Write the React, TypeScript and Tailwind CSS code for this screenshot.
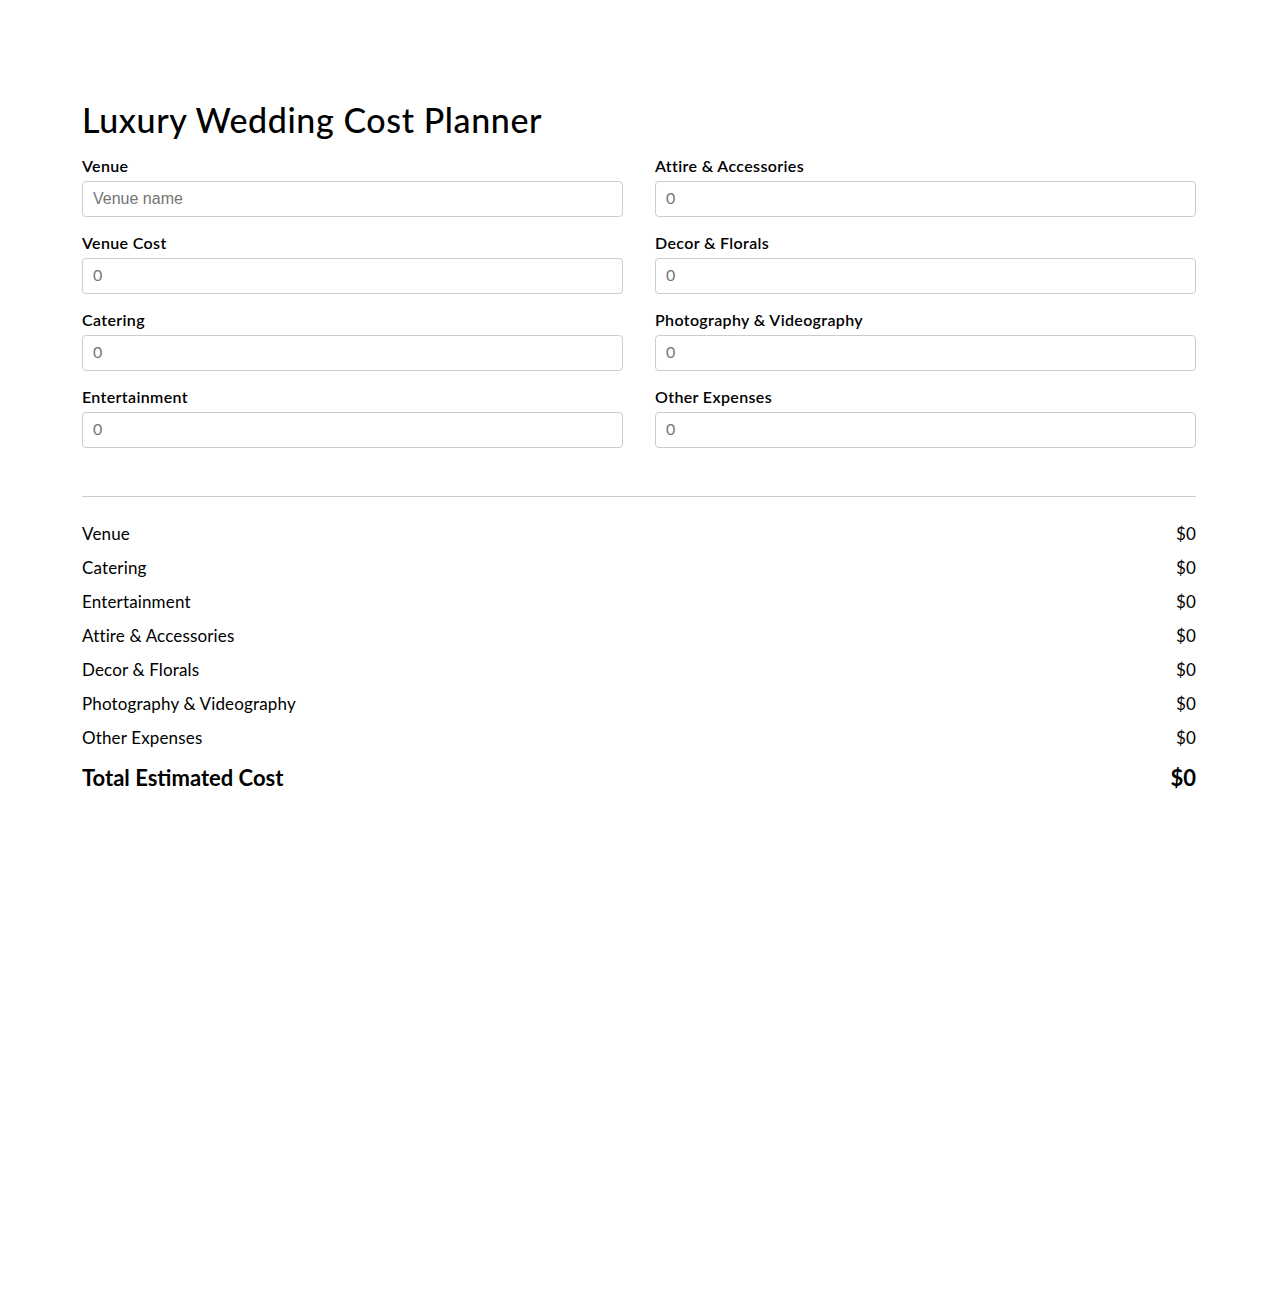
import React, { useState } from 'react'

type Field = {
  key: string
  label: string
}

const leftFields: Field[] = [
  { key: 'venueCost', label: 'Venue Cost' },
  { key: 'catering', label: 'Catering' },
  { key: 'entertainment', label: 'Entertainment' },
]

const rightFields: Field[] = [
  { key: 'attire', label: 'Attire & Accessories' },
  { key: 'decor', label: 'Decor & Florals' },
  { key: 'photo', label: 'Photography & Videography' },
  { key: 'other', label: 'Other Expenses' },
]

const summaryRows: Field[] = [
  { key: 'venueCost', label: 'Venue' },
  { key: 'catering', label: 'Catering' },
  { key: 'entertainment', label: 'Entertainment' },
  { key: 'attire', label: 'Attire & Accessories' },
  { key: 'decor', label: 'Decor & Florals' },
  { key: 'photo', label: 'Photography & Videography' },
  { key: 'other', label: 'Other Expenses' },
]

const inputClass =
  'h-9 w-full rounded border border-[#cccccc] bg-white px-[10px] text-base text-black placeholder:text-[#757575] outline-none'

const labelClass = 'mb-[5px] text-[16px] font-semibold leading-5 tracking-[0.35px] text-black'

function CostInput({ label, value, onChange }: { label: string; value: string; onChange: (v: string) => void }) {
  return (
    <div className="flex flex-col">
      <label className={labelClass}>{label}</label>
      <input
        type="number"
        placeholder="0"
        value={value}
        onChange={(e) => onChange(e.target.value)}
        className={`${inputClass} pb-[4px] font-['Lato',sans-serif]`}
      />
    </div>
  )
}

export default function App() {
  const [venue, setVenue] = useState('')
  const [costs, setCosts] = useState<Record<string, string>>({})

  const setCost = (key: string) => (v: string) => setCosts((c) => ({ ...c, [key]: v }))
  const amount = (key: string) => Number(costs[key]) || 0
  const total = summaryRows.reduce((sum, r) => sum + amount(r.key), 0)

  return (
    <div className="min-h-screen bg-white font-['Lato',sans-serif] text-black">
      <div className="px-[82px] pt-[98px]">
        <h1 className="mb-[14px] text-[34px] font-medium leading-[44px] tracking-[0.6px]">Luxury Wedding Cost Planner</h1>

        <div className="grid grid-cols-2 gap-x-8">
          <div className="flex flex-col gap-4">
            <div className="flex flex-col">
              <label className={labelClass}>Venue</label>
              <input
                type="text"
                placeholder="Venue name"
                value={venue}
                onChange={(e) => setVenue(e.target.value)}
                className={`${inputClass} font-['Liberation_Sans',Arial,sans-serif]`}
              />
            </div>
            {leftFields.map((f) => (
              <CostInput key={f.key} label={f.label} value={costs[f.key] ?? ''} onChange={setCost(f.key)} />
            ))}
          </div>
          <div className="flex flex-col gap-4">
            {rightFields.map((f) => (
              <CostInput key={f.key} label={f.label} value={costs[f.key] ?? ''} onChange={setCost(f.key)} />
            ))}
          </div>
        </div>

        <hr className="mt-12 border-t border-[#cccccc]" />

        <div className="mt-[25px] flex flex-col gap-[10px]">
          {summaryRows.map((r) => (
            <div key={r.key} className="flex justify-between text-[17px] leading-6 tracking-[0.15px]">
              <span>{r.label}</span>
              <span>${amount(r.key)}</span>
            </div>
          ))}
          <div className="mt-[4px] flex justify-between text-[22px] font-bold leading-7">
            <span>Total Estimated Cost</span>
            <span>${total}</span>
          </div>
        </div>
      </div>
    </div>
  )
}
